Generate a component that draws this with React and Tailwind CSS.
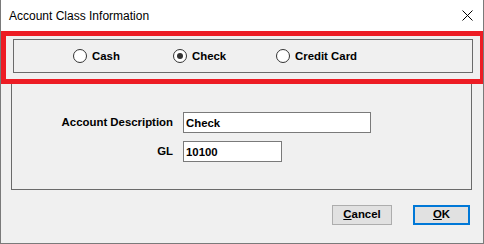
import React, { useState } from 'react';

function Radio({ label, checked, onChange, width }) {
  return (
    <label className={`flex items-center gap-[5px] ${width}`} onClick={onChange}>
      <span className="w-[14px] h-[14px] rounded-full border border-[#333333] bg-white flex items-center justify-center">
        {checked && <span className="w-[6px] h-[6px] rounded-full bg-[#333333]" />}
      </span>
      <span>{label}</span>
    </label>
  );
}

function App() {
  const [accountClass, setAccountClass] = useState('Check');
  const [description, setDescription] = useState('Check');
  const [gl, setGl] = useState('10100');

  return (
    <div className="relative w-[484px] h-[244px] bg-[#f0f0f0] border-x border-b border-[#7a7a7a] font-['Liberation_Sans',Arial,sans-serif] text-black overflow-hidden">
      {/* title bar */}
      <div className="h-[31px] bg-white flex items-center justify-between pl-[8px] pr-[10px]">
        <span className="text-[12px]">Account Class Information</span>
        <svg width="11" height="11" viewBox="0 0 11 11" className="mt-[-1px]">
          <path d="M0.5 0.5 L10.5 10.5 M10.5 0.5 L0.5 10.5" stroke="#000" strokeWidth="1" />
        </svg>
      </div>

      {/* account class radio group */}
      <div className="ml-[12px] mt-[8px] w-[460px] h-[34px] border border-[#6a6a6a] flex items-center pt-[1px] pl-[59px] text-[11.4px] font-bold">
        {['Cash', 'Check', 'Credit Card'].map((c, i) => (
          <Radio
            key={c}
            label={c}
            checked={accountClass === c}
            onChange={() => setAccountClass(c)}
            width={i === 0 ? 'w-[100px]' : i === 1 ? 'w-[103px]' : ''}
          />
        ))}
      </div>

      {/* details */}
      <div className="ml-[10px] mt-[7px] w-[461px] h-[110px] border border-[#6a6a6a] pt-[31px] text-[11.4px] font-bold">
        <div className="flex items-center">
          <span className="w-[161px] text-right">Account Description</span>
          <input
            value={description}
            onChange={e => setDescription(e.target.value)}
            className="ml-[10px] w-[188px] h-[21px] border border-[#7a7a7a] bg-white px-[2px] outline-none"
          />
        </div>
        <div className="flex items-center mt-[8px]">
          <span className="w-[161px] text-right">GL</span>
          <input
            value={gl}
            onChange={e => setGl(e.target.value)}
            className="ml-[10px] w-[99px] h-[21px] border border-[#7a7a7a] bg-white px-[2px] outline-none"
          />
        </div>
      </div>

      {/* buttons */}
      <div className="flex justify-end gap-[21px] mt-[15px] pr-[13px] text-[11.4px] font-bold">
        <button className="w-[60px] h-[20px] border border-[#adadad] bg-[#e1e1e1] flex items-center justify-center">
          <span><span className="underline">C</span>ancel</span>
        </button>
        <button className="w-[57px] h-[20px] border-2 border-[#0078d7] bg-[#e1e1e1] flex items-center justify-center">
          <span><span className="underline">O</span>K</span>
        </button>
      </div>

      {/* red highlight annotation */}
      <div className="absolute left-0 top-[31px] w-[484px] h-[53px] border-[5px] border-[#ed1c24] pointer-events-none" />
    </div>
  );
}

export default App;
